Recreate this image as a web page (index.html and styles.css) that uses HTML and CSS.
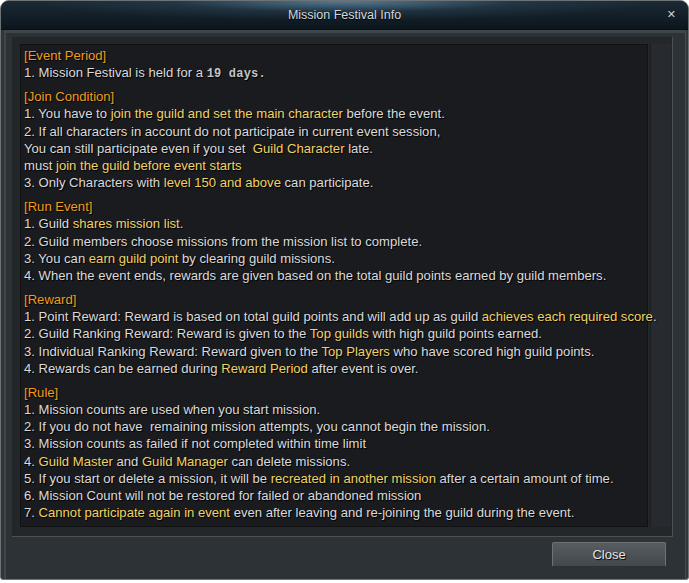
FILE: index.html
```html
<!DOCTYPE html>
<html>
<head>
<meta charset="utf-8">
<link rel="stylesheet" href="styles.css">
</head>
<body>
<div class="window">
  <div class="titlebar">
    <span class="title">Mission Festival Info</span>
    <span class="close-x">&#x2715;</span>
  </div>
  <div class="main">
    <div class="frame">
      <div class="inner">
        <div class="text">
          <div class="section">
            <div class="hd">[Event Period]</div>
            <div class="ln">1. Mission Festival is held for a <span class="mono">19 days.</span></div>
          </div>
          <div class="section">
            <div class="hd">[Join Condition]</div>
            <div class="ln">1. You have to <span class="hl">join the guild and set the main character</span> before the event.</div>
            <div class="ln">2. If all characters in account do not participate in current event session,</div>
            <div class="ln">You can still participate even if you set  <span class="hl">Guild Character</span> late.</div>
            <div class="ln">must <span class="hl">join the guild before event starts</span></div>
            <div class="ln">3. Only Characters with <span class="hl">level 150 and above</span> can participate.</div>
          </div>
          <div class="section">
            <div class="hd">[Run Event]</div>
            <div class="ln">1. Guild <span class="hl">shares mission list</span>.</div>
            <div class="ln">2. Guild members choose missions from the mission list to complete.</div>
            <div class="ln">3. You can <span class="hl">earn guild point</span> by clearing guild missions.</div>
            <div class="ln">4. When the event ends, rewards are given based on the total guild points earned by guild members.</div>
          </div>
          <div class="section">
            <div class="hd">[Reward]</div>
            <div class="ln">1. Point Reward: Reward is based on total guild points and will add up as guild <span class="hl">achieves each required score</span>.</div>
            <div class="ln">2. Guild Ranking Reward: Reward is given to the <span class="hl">Top guilds</span> with high guild points earned.</div>
            <div class="ln">3. Individual Ranking Reward: Reward given to the <span class="hl">Top Players</span> who have scored high guild points.</div>
            <div class="ln">4. Rewards can be earned during <span class="hl">Reward Period</span> after event is over.</div>
          </div>
          <div class="section">
            <div class="hd">[Rule]</div>
            <div class="ln">1. Mission counts are used when you start mission.</div>
            <div class="ln">2. If you do not have  remaining mission attempts, you cannot begin the mission.</div>
            <div class="ln">3. Mission counts as failed if not completed within time limit</div>
            <div class="ln">4. <span class="hl">Guild Master</span> and <span class="hl">Guild Manager</span> can delete missions.</div>
            <div class="ln">5. If you start or delete a mission, it will be <span class="hl">recreated in another mission</span> after a certain amount of time.</div>
            <div class="ln">6. Mission Count will not be restored for failed or abandoned mission</div>
            <div class="ln">7. <span class="hl">Cannot participate again in event</span> even after leaving and re-joining the guild during the event.</div>
          </div>
        </div>
        <div class="track"></div>
      </div>
      <div class="footer">
        <button class="btn">Close</button>
      </div>
    </div>
  </div>
</div>
</body>
</html>
```

FILE: styles.css
```css
html, body {
  margin: 0;
  padding: 0;
  background: #ffffff;
}
body {
  width: 689px;
  height: 583px;
  overflow: hidden;
  font-family: "Liberation Sans", Arial, sans-serif;
}
.window {
  box-sizing: border-box;
  width: 689px;
  height: 580px;
  background: #30363a;
  border: 1px solid #6e7376;
  border-radius: 9px 9px 3px 3px;
  display: flex;
  flex-direction: column;
  overflow: hidden;
}
.titlebar {
  height: 29px;
  flex: none;
  position: relative;
  display: flex;
  align-items: center;
  justify-content: center;
  background:
    radial-gradient(ellipse 45% 70% at 50% 0%, rgba(105, 150, 180, 0.75), rgba(60, 95, 120, 0.25) 55%, rgba(0, 0, 0, 0) 100%),
    linear-gradient(#1b2a35, #0c151c);
  border-bottom: 1px solid #0a0f13;
  box-sizing: border-box;
}
.title {
  color: #d2d8dc;
  font-size: 12.5px;
  text-shadow: 0 1px 1px #000;
}
.close-x {
  position: absolute;
  right: 12px;
  top: 7px;
  color: #c9cfd2;
  font-size: 11px;
  font-weight: bold;
  font-family: "DejaVu Sans", sans-serif;
}
.main {
  flex: 1;
  display: flex;
  min-width: 0;
  padding: 0 2px 0 3px;
}
.frame {
  flex: 1;
  min-width: 0;
  display: flex;
  flex-direction: column;
  border-top: 3px solid #3f464a;
  border-left: 2px solid #3f464a;
  border-right: 1px solid #464d51;
  padding: 4px 12px 0 6px;
  background: #2d3236;
}
.inner {
  box-sizing: border-box;
  height: 500px;
  flex: none;
  min-width: 0;
  display: flex;
  background: #23272a;
  border-right: 1px solid #4a5155;
  border-bottom: 1px solid #4a5155;
  padding: 7px 1px 9px 8px;
}
.text {
  position: relative;
  z-index: 1;
  flex: 1;
  min-width: 0;
  background: #1a1b1f;
  border: 1px solid #111214;
  padding: 2px 3px;
  color: #dadada;
  font-size: 13.1px;
  line-height: 17.2px;
  text-shadow: 1px 1px 1px #000;
  overflow: visible;
}
.hd, .ln {
  white-space: pre;
}
.track {
  flex: none;
  width: 20px;
  margin-left: 2px;
  background: #272b2f;
  border-left: 1px solid #1c1f22;
}
.section + .section {
  margin-top: 6.8px;
}
.hd {
  color: #f09c1e;
}
.hl {
  color: #f0d264;
}
.mono {
  font-family: "Liberation Mono", monospace;
  color: #c4c4c4;
  font-weight: bold;
  font-size: 12px;
  line-height: 0;
  letter-spacing: 0.2px;
}
.footer {
  flex: 1;
  display: flex;
  justify-content: flex-end;
  align-items: flex-start;
  padding-top: 5px;
}
.btn {
  width: 114px;
  height: 25px;
  margin-right: 7px;
  background: linear-gradient(#565c60, #42484c);
  border: 1px solid #6c7275;
  border-bottom-color: #2c3134;
  border-radius: 2px;
  color: #e6e6e6;
  font-family: "Liberation Sans", Arial, sans-serif;
  font-size: 13px;
  text-shadow: 1px 1px 1px #000;
  padding: 0;
}
```
